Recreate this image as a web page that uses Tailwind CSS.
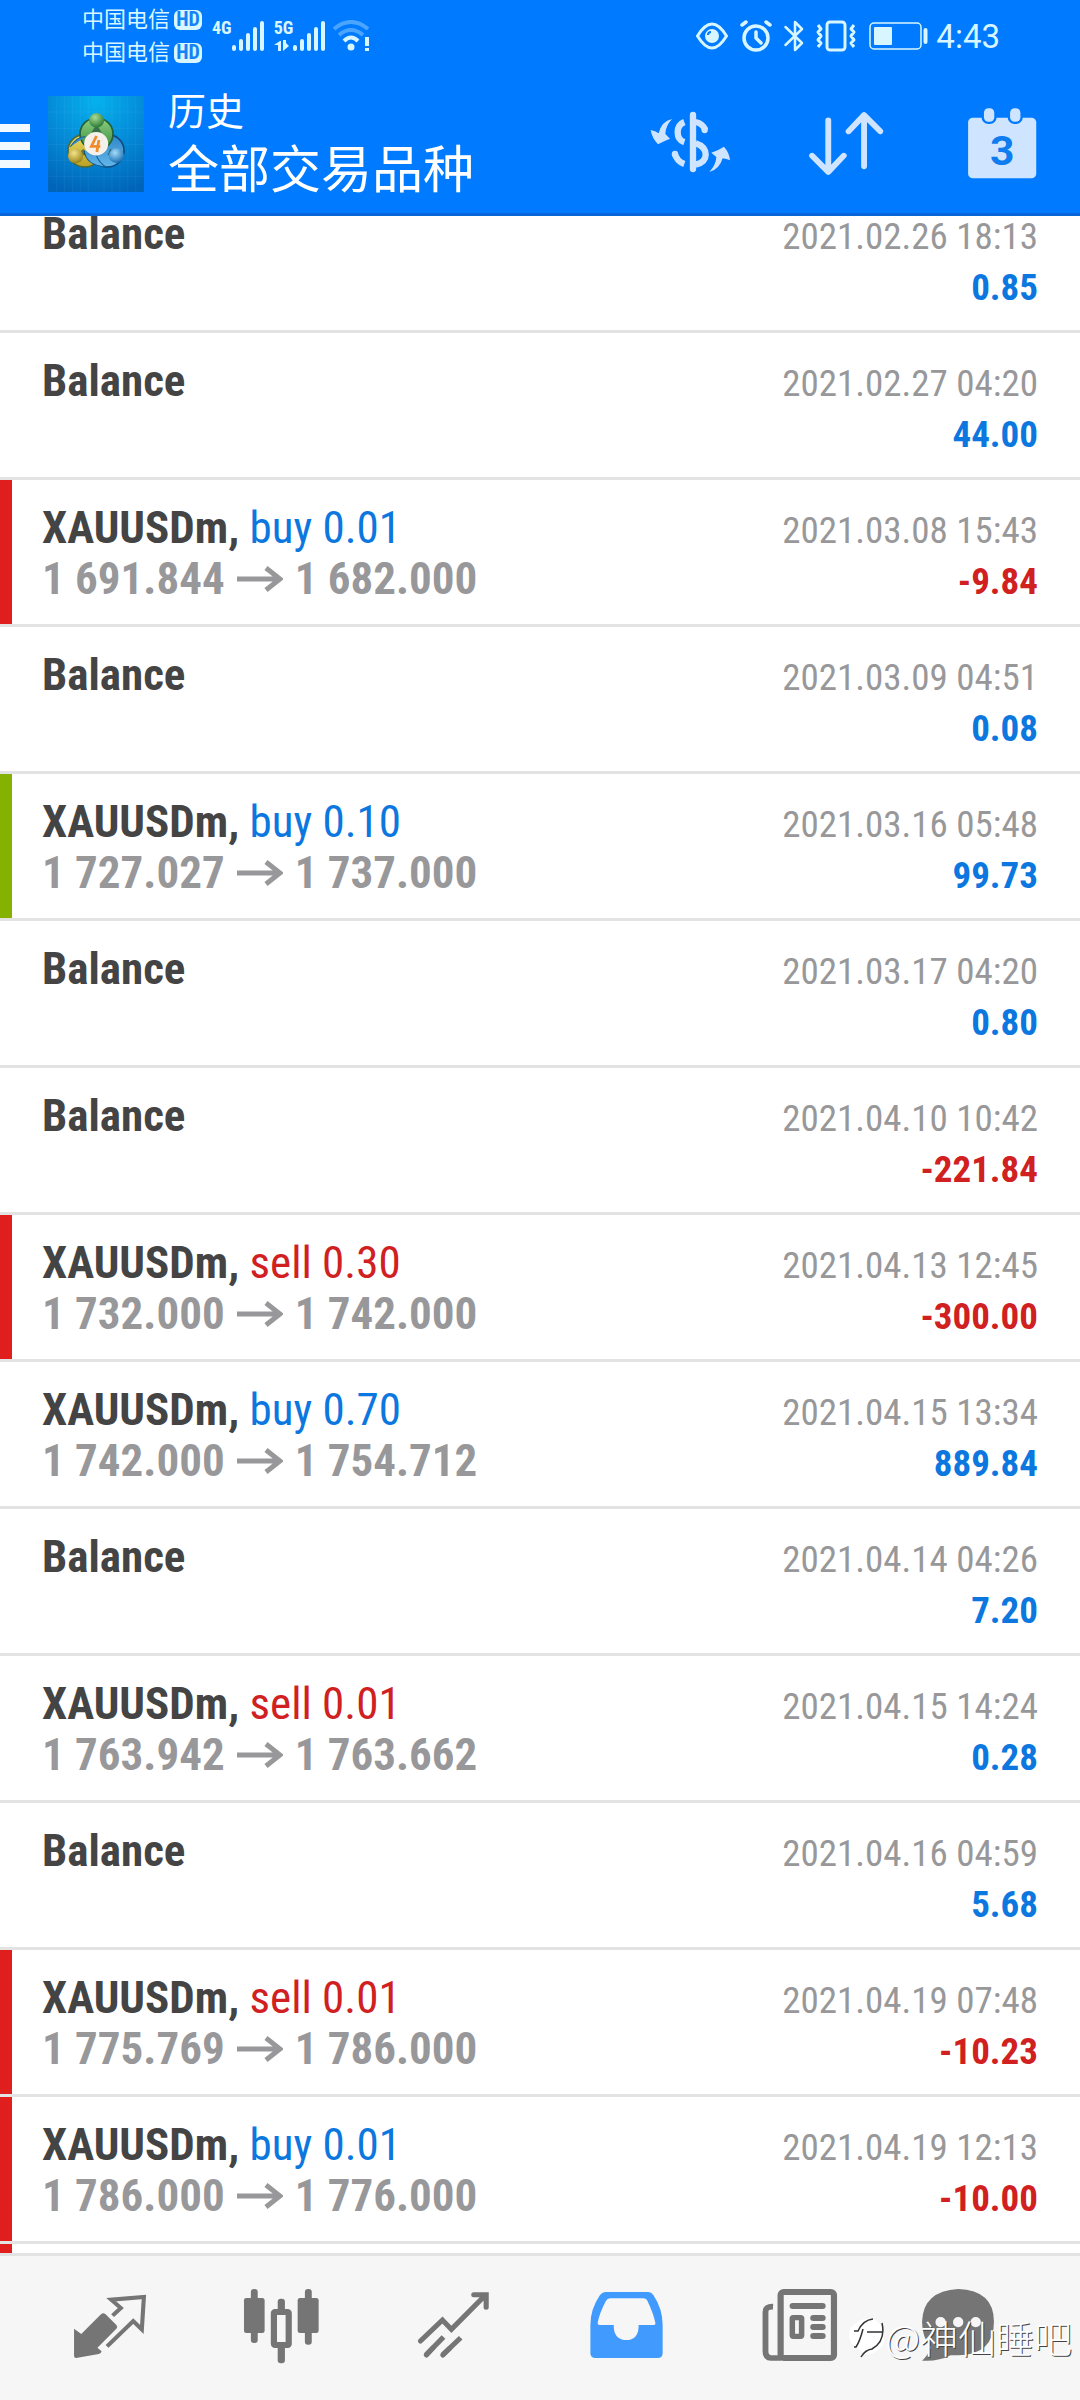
<!DOCTYPE html>
<html lang="zh-CN">
<head>
<meta charset="utf-8">
<meta name="viewport" content="width=device-width, initial-scale=1">
<title>历史</title>
<script src="https://cdn.jsdelivr.net/npm/@tailwindcss/browser@4"></script>
</head>
<body class="bg-white">
<div class="relative flex h-screen flex-col overflow-hidden font-['Roboto_Condensed','Liberation_Sans_Narrow',Roboto,'Noto_Sans_CJK_SC',sans-serif]">

  <header class="z-10 shrink-0 border-b-3 border-[#0a66d8] bg-[#007aff] font-[Roboto,'Noto_Sans_CJK_SC',sans-serif] text-white">
    <!-- status bar -->
    <div class="flex h-18 items-center justify-between pr-20 pl-[82px] text-[#d8f6ff]">
      <div class="flex items-center">
        <div class="flex flex-col text-[22px] leading-[33px]">
          <div class="flex items-center gap-1"><span>中国电信</span><span class="flex h-5 w-7 items-center justify-center rounded-md bg-[#d8f6ff] font-['Roboto_Condensed','Liberation_Sans_Narrow',Roboto] text-[20px] font-bold text-[#1583f5]">HD</span></div>
          <div class="flex items-center gap-1"><span>中国电信</span><span class="flex h-5 w-7 items-center justify-center rounded-md bg-[#d8f6ff] font-['Roboto_Condensed','Liberation_Sans_Narrow',Roboto] text-[20px] font-bold text-[#1583f5]">HD</span></div>
        </div>
        <div class="ml-2.5 flex h-8 items-end">
          <span class="self-start font-['Roboto_Condensed','Liberation_Sans_Narrow',Roboto] text-[18px] leading-4 font-bold">4G</span>
          <svg class="h-8 w-8" viewBox="0 0 32 32" stroke="currentColor" stroke-width="4" stroke-linecap="round"><path d="M2 27v2M9 21v8M16 15v14M23 9v20M30 3v26"/></svg>
        </div>
        <div class="ml-2.5 flex h-8 items-end">
          <span class="flex flex-col self-start font-['Roboto_Condensed','Liberation_Sans_Narrow',Roboto] text-[18px] leading-4 font-bold">5G
            <svg class="mt-1 h-3 w-4" viewBox="0 0 16 12" fill="currentColor"><path d="M0 5l6-4h1v10H4V5zM9 0h3v3l3 3-6 5z"/></svg>
          </span>
          <svg class="h-8 w-8" viewBox="0 0 32 32" stroke="currentColor" stroke-width="4" stroke-linecap="round"><path d="M2 27v2M9 21v8M16 15v14M23 9v20M30 3v26"/></svg>
        </div>
        <svg class="ml-2 h-8 w-9" viewBox="0 0 36 32" fill="none" stroke="currentColor" stroke-width="4"><path d="M1 9Q18-5 35 9M6 15Q18 5 30 15" stroke="#4aa5ff"/><path d="M11 21Q18 14 25 21M34 17v9M34 28v3"/><circle cx="18" cy="27" r="3.500" fill="currentColor" stroke="none"/></svg>
      </div>
      <div class="flex items-center gap-3">
        <svg class="h-8 w-8" viewBox="0 0 32 32" fill="none" stroke="currentColor" stroke-width="3"><path d="M1.500 16Q16-8 30.500 16Q16 40 1.500 16Z"/><circle cx="16" cy="16" r="7" fill="currentColor" stroke="none"/><path d="M12 15q0-3 3-3" stroke="#007aff" stroke-width="2"/></svg>
        <svg class="h-8 w-8" viewBox="0 0 32 32" fill="none" stroke="currentColor" stroke-width="3.500" stroke-linecap="round" stroke-linejoin="round"><circle cx="16" cy="18" r="12"/><path d="M2 5l4-3M30 5l-4-3M16 12v6l5 5"/></svg>
        <svg class="h-8 w-5" viewBox="0 0 20 32" fill="none" stroke="currentColor" stroke-width="2.500" stroke-linecap="round" stroke-linejoin="round"><path d="M1.500 7L18 23l-7 7V2l7 7L1.500 25"/></svg>
        <svg class="h-8 w-10" viewBox="0 0 40 32" fill="none" stroke="currentColor" stroke-width="3" stroke-linejoin="round"><rect x="11" y="2" width="18" height="28" rx="3"/><path d="M2 5l3 4-3 3 3 4-3 4 3 3-3 4M38 5l-3 4 3 3-3 4 3 4-3 3 3 4"/></svg>
        <svg class="h-8 w-[60px]" viewBox="0 0 60 32" fill="none" stroke="currentColor"><rect x="2" y="3" width="51" height="26" rx="4" stroke-width="1.500"/><rect x="6" y="7" width="18" height="18" rx="1" fill="currentColor" stroke="none"/><path d="M57.500 10v12" stroke-width="4" stroke-linecap="round"/></svg>
        <time class="-ml-1 pt-0.5 text-[33px] leading-9">4:43</time>
      </div>
    </div>
    <!-- app bar -->
    <div class="flex h-[141px] items-center pt-[3px] pr-[30px]">
      <button type="button" aria-label="Menu" class="mr-[18px]">
        <svg class="h-24 w-[30px]" viewBox="0 0 30 96" fill="#f2faff"><path d="M0 28h30v8H0zM0 46h30v8H0zM0 64h30v8H0z"/></svg>
      </button>
      <svg class="h-24 w-24 shrink-0" viewBox="139 288 279 288" preserveAspectRatio="none" aria-hidden="true">
        <defs>
          <radialGradient id="sky" cx=".5" cy=".05" r="1"><stop offset="0" stop-color="#05b1ee"/><stop offset=".5" stop-color="#048bd8"/><stop offset="1" stop-color="#0064b8"/></radialGradient>
          <radialGradient id="gb" cx=".4" cy=".3" r=".7"><stop offset="0" stop-color="#a9dc95"/><stop offset="1" stop-color="#2a7a35"/></radialGradient>
          <radialGradient id="yb" cx=".4" cy=".3" r=".7"><stop offset="0" stop-color="#f4e48a"/><stop offset="1" stop-color="#9a8418"/></radialGradient>
          <radialGradient id="bb" cx=".4" cy=".3" r=".7"><stop offset="0" stop-color="#a5dcf8"/><stop offset="1" stop-color="#1a6fb4"/></radialGradient>
          <linearGradient id="gr" x2="0" y2="1"><stop offset="0" stop-color="#8fcf80"/><stop offset="1" stop-color="#35893c"/></linearGradient>
          <linearGradient id="yr" x2="0" y2="1"><stop offset="0" stop-color="#ecdc62"/><stop offset="1" stop-color="#b8a023"/></linearGradient>
          <linearGradient id="br" x2="0" y2="1"><stop offset="0" stop-color="#2f86c8"/><stop offset="1" stop-color="#62b6ea"/></linearGradient>
        </defs>
        <path fill="url(#sky)" d="M139 288h279v288H139z"/>
        <path stroke="#fff" stroke-opacity=".07" stroke-width="2" d="M164 288v288M187 288v288M210 288v288M233 288v288M256 288v288M302 288v288M325 288v288M348 288v288M371 288v288M394 288v288M139 336h279M139 386h279M139 434h279M139 482h279M139 530h279"/>
        <circle cx="246" cy="452" r="49" fill="url(#yr)" stroke="#4c6a3a" stroke-width="5"/>
        <circle cx="311" cy="452" r="49" fill="url(#br)" stroke="#0f4d82" stroke-width="5"/>
        <circle cx="280" cy="402" r="48" fill="url(#gr)" stroke="#22613a" stroke-width="5"/>
        <path d="M244 450q4 46 62 50-18-12-26-32M204 440q20-32 44-30" fill="url(#br)" stroke="#155f95" stroke-width="3"/>
        <path d="M280 372l-16 28 16-4 16 4zM222 464l26 2-6-20zM338 464l-26 2 8-20z" fill="#0d3b32" opacity=".55"/>
        <circle cx="280" cy="361" r="22" fill="url(#gb)"/><circle cx="219" cy="468" r="22" fill="url(#yb)"/><circle cx="338" cy="467" r="22" fill="url(#bb)"/>
        <circle cx="279" cy="431" r="35" fill="#f5f1ea"/>
        <path d="M280 408l-15 31h26M287 420l-6 36" fill="none" stroke="#f08c2c" stroke-width="8"/>
      </svg>
      <div class="ml-6 flex min-w-0 flex-1 flex-col pt-1">
        <span class="text-[38px] leading-[50px]">历史</span>
        <h1 class="text-[51px] leading-[68px] font-normal whitespace-nowrap">全部交易品种</h1>
      </div>
      <div class="flex gap-[60px]">
        <button type="button" aria-label="交易品种">
          <svg class="h-24 w-24" viewBox="0 0 288 288" fill="none" stroke="#cfe5ff" stroke-width="19">
            <path stroke-linecap="round" d="M153 57v162M188 102v-2M99 174v1"/>
            <path d="M127 78q-20 8-20 31t20 30M98 172q6 24 29 32M161 78q21 4 29 24M161 142q30 10 30 34 0 22-30 30"/>
            <path fill="#cfe5ff" stroke="none" d="M90 69q-20 22-20 45l14 14q-16 6-36 17-18-19-22-43 14 2 24 10 8-36 40-43zM202 228q20-22 21-45l-15-13q18-5 38-18 16 18 18 41-10-4-22-6-10 34-40 41z"/>
          </svg>
        </button>
        <button type="button" aria-label="排序">
          <svg class="h-24 w-24" viewBox="749 288 279 288" preserveAspectRatio="none" fill="none" stroke="#cfe5ff" stroke-width="17" stroke-linecap="round" stroke-linejoin="round"><path d="M837 361v154M790 467l47 49 45-49M941 499V345M896 394l45-49 47 49"/></svg>
        </button>
        <button type="button" aria-label="日期">
          <svg class="h-24 w-24" viewBox="1202 288 279 288" preserveAspectRatio="none">
            <rect x="1243" y="353" width="198" height="182" rx="14" fill="#cfe5ff"/>
            <rect x="1289" y="325" width="30" height="40" rx="13" fill="#cfe5ff" stroke="#007aff" stroke-width="14" paint-order="stroke"/>
            <rect x="1365" y="325" width="30" height="40" rx="13" fill="#cfe5ff" stroke="#007aff" stroke-width="14" paint-order="stroke"/>
            <text x="1342" y="495" text-anchor="middle" font-family="Roboto" font-size="124" font-weight="700" fill="#0f7cf0">3</text>
          </svg>
        </button>
      </div>
    </div>
  </header>

  <main class="min-h-0 flex-1 overflow-hidden">
    <ul id="history" class="-mt-[30px]"></ul>
  </main>

  <nav class="z-10 shrink-0 border-t-3 border-[#e3e3e3] bg-[#f6f6f6]">
    <ul class="grid h-36 grid-cols-6 items-center px-6 text-[#757575]">
      <li class="flex justify-center"><a href="#quotes" aria-label="行情">
        <svg class="h-24 w-24" viewBox="180 240 279 288" preserveAspectRatio="none"><path fill="currentColor" d="M215 386l21 16 58-60q6-5 12 0l32 33q5 6 0 11l-55 57 12 11q-1 7-8 8l-66 12q-6 0-6-6z"/><path fill="none" stroke="currentColor" stroke-width="12" d="M327 347l24-23-28-25 95-8-6 97-25-25-76 76"/></svg></a></li>
      <li class="flex justify-center"><a href="#chart" aria-label="图表">
        <svg class="h-24 w-24" viewBox="680 240 279 288" preserveAspectRatio="none" fill="currentColor"><rect x="709" y="294" width="60" height="105" rx="7"/><rect x="729" y="267" width="20" height="162" rx="9"/><rect x="865" y="294" width="61" height="105" rx="7"/><rect x="886" y="267" width="20" height="167" rx="9"/><rect x="807" y="296" width="21" height="40" rx="9"/><rect x="807" y="436" width="21" height="54" rx="9"/><rect x="796" y="336" width="43" height="99" rx="3" fill="none" stroke="currentColor" stroke-width="18"/></svg></a></li>
      <li class="flex justify-center"><a href="#trade" aria-label="交易">
        <svg class="h-24 w-24" viewBox="1179 240 279 288" preserveAspectRatio="none" fill="none" stroke="currentColor" stroke-width="15"><path stroke-linecap="round" d="M1221 423l64-63 26 28 94-98M1376 284h36v38"/><path d="M1288 411l-51 54M1338 413l-53 52"/><path stroke-linecap="round" d="M1238 465l20-22M1286 465l20-20"/></svg></a></li>
      <li class="flex justify-center"><a href="#history" aria-label="历史" aria-current="page">
        <svg class="h-24 w-24" viewBox="110 240 279 288" preserveAspectRatio="none"><path fill="#419bff" fill-rule="evenodd" d="M190 276H314q9 0 15 9 27 42 27 90v85q0 14-14 14H161q-15 0-15-14v-85q0-48 28-90 7-9 16-9zM203 295q-8 0-12 8-19 37-24 66 0 6 6 6h41v8q3 37 37 37 32 0 35-37v-8h45q4 0 4-6-6-29-22-64-5-10-13-10z"/></svg></a></li>
      <li class="flex justify-center"><a href="#news" aria-label="新闻">
        <svg class="h-24 w-24" viewBox="610 240 279 288" preserveAspectRatio="none" fill="none" stroke="currentColor" stroke-width="18"><rect x="699" y="276" width="155" height="198" rx="9"/><path d="M677 320q-22-1-22 16v118q0 20 16 20h30" stroke-width="17"/><path stroke-linecap="round" d="M734 318h87M794 354h27M794 381h27M794 408h27"/><rect x="733" y="353" width="27" height="56" rx="3" stroke-width="16"/></svg></a></li>
      <li class="flex justify-center pr-6"><a href="#messages" aria-label="消息">
        <svg class="h-24 w-24" viewBox="1074 240 279 288" preserveAspectRatio="none"><path fill="currentColor" d="M1214 267q104 4 104 98 0 98-104 101h-22q-34 19-83 16 15-12 26-40-26-29-26-77 3-92 105-98z"/><path stroke="#f6f6f6" stroke-width="30" stroke-linecap="round" d="M1163 366v1M1214 366v1M1265 366v1"/></svg></a></li>
    </ul>
  </nav>

  <!-- author signature laid over the tab bar -->
  <div class="pointer-events-none absolute right-2 bottom-9 z-20 flex items-center font-['Noto_Sans_CJK_SC',sans-serif] text-[38px] leading-[54px] font-light text-white [text-shadow:1px_1px_0_#444]">
    <svg class="h-12 w-9" viewBox="0 0 36 48" fill="none"><path d="M2 14q14-13 26-6 10 8 6 24-8 10-18 9L2 30q-4-8 0-16z" fill="#fff"/><path d="M5 18h4Q14 7 24 6M5 34h2q4-6 7-18M18 19h15M33 10q4 18-10 26-7 1-11 8" stroke="#333" stroke-width="1.500"/></svg>
    <span>@神仙睡吧</span>
  </div>
</div>

<script>
  // [date, profit, side, volume, open price, close price, marker]
  const deals = [
    ["2021.02.26 18:13", "0.85"],
    ["2021.02.27 04:20", "44.00"],
    ["2021.03.08 15:43", "-9.84", "buy", "0.01", "1 691.844", "1 682.000", "sl"],
    ["2021.03.09 04:51", "0.08"],
    ["2021.03.16 05:48", "99.73", "buy", "0.10", "1 727.027", "1 737.000", "tp"],
    ["2021.03.17 04:20", "0.80"],
    ["2021.04.10 10:42", "-221.84"],
    ["2021.04.13 12:45", "-300.00", "sell", "0.30", "1 732.000", "1 742.000", "sl"],
    ["2021.04.15 13:34", "889.84", "buy", "0.70", "1 742.000", "1 754.712"],
    ["2021.04.14 04:26", "7.20"],
    ["2021.04.15 14:24", "0.28", "sell", "0.01", "1 763.942", "1 763.662"],
    ["2021.04.16 04:59", "5.68"],
    ["2021.04.19 07:48", "-10.23", "sell", "0.01", "1 775.769", "1 786.000", "sl"],
    ["2021.04.19 12:13", "-10.00", "buy", "0.01", "1 786.000", "1 776.000", "sl"],
    ["", "", "", "", "", "", "sl"],
  ];
  const marker = { sl: "border-l-[#e11e1e]", tp: "border-l-[#85b200]" };
  const tone = { buy: "text-[#0d77e0]", sell: "text-[#d0201f]" };
  const arrow = '<svg class="mx-3 inline-block h-7 w-[46px]" viewBox="0 0 46 28" fill="none" stroke="currentColor" stroke-width="5" aria-label="→"><path d="M0 14h43M29 3l14 11-14 11"/></svg>';
  document.getElementById("history").innerHTML = deals.map(([date, profit, side, volume, open, close, mark]) => `
    <li class="h-[147px] border-b-3 border-b-[#e3e3e3]">
      <div class="h-36 border-l-12 pt-6 pr-[42px] pl-[30px] leading-[48px] ${marker[mark] || "border-l-white"}">
        ${date ? `<div class="flex items-baseline justify-between">
          <span class="text-[45px] font-bold text-[#444444]">${side ? `XAUUSDm, <span class="font-normal ${tone[side]}">${side} ${volume}</span>` : "Balance"}</span>
          <time class="text-[37px] text-[#98989a]">${date}</time>
        </div>
        <div class="flex items-baseline justify-between font-bold">
          <span class="flex items-center text-[45px] text-[#98989b]">${side ? open + arrow + close : "&nbsp;"}</span>
          <span class="text-[37px] ${profit[0] === "-" ? tone.sell : tone.buy}">${profit}</span>
        </div>` : ""}
      </div>
    </li>`).join("");
</script>
</body>
</html>
